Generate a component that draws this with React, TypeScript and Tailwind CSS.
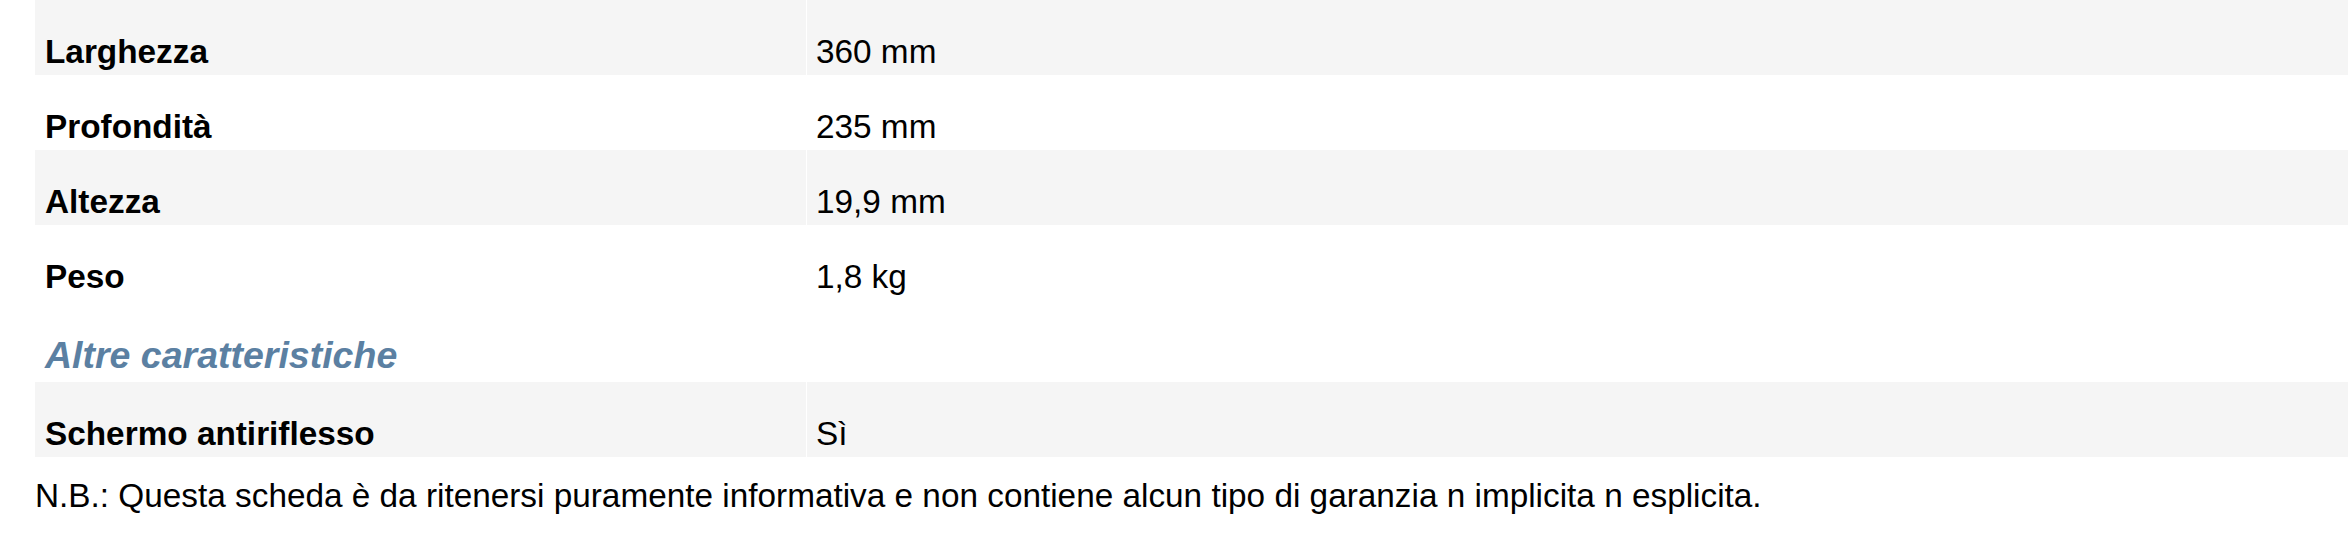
const dimensioni = [
  { label: 'Larghezza', value: '360 mm' },
  { label: 'Profondità', value: '235 mm' },
  { label: 'Altezza', value: '19,9 mm' },
  { label: 'Peso', value: '1,8 kg' },
];

const altre = [{ label: 'Schermo antiriflesso', value: 'Sì' }];

function SpecRow({ label, value, shaded }: { label: string; value: string; shaded: boolean }) {
  const bg = shaded ? 'bg-[#f5f5f5]' : 'bg-white';
  return (
    <div className="grid grid-cols-[771px_1fr] gap-x-px h-[75px]">
      <div className={`${bg} pl-[10px] pt-[33px] leading-[37px] font-bold`}>{label}</div>
      <div className={`${bg} pl-[9px] pt-[33px] leading-[37px]`}>{value}</div>
    </div>
  );
}

export default function App() {
  return (
    <div className="w-[2348px] h-[556px] overflow-hidden bg-white text-black text-[33.33px] font-['Liberation_Sans',Arial,sans-serif]">
      <div className="ml-[35px]">
        {dimensioni.map((row, i) => (
          <SpecRow key={row.label} label={row.label} value={row.value} shaded={i % 2 === 0} />
        ))}

        {/* Section heading */}
        <div className="h-[82px] pl-[10px] pt-[34px] leading-[42px] text-[37.5px] font-bold italic text-[#5b80a2]">
          Altre caratteristiche
        </div>

        {altre.map((row, i) => (
          <SpecRow key={row.label} label={row.label} value={row.value} shaded={i % 2 === 0} />
        ))}
      </div>

      <p className="ml-[35px] mt-[20px] leading-[37px]">
        N.B.: Questa scheda è da ritenersi puramente informativa e non contiene alcun tipo di garanzia n implicita n esplicita.
      </p>
    </div>
  );
}
